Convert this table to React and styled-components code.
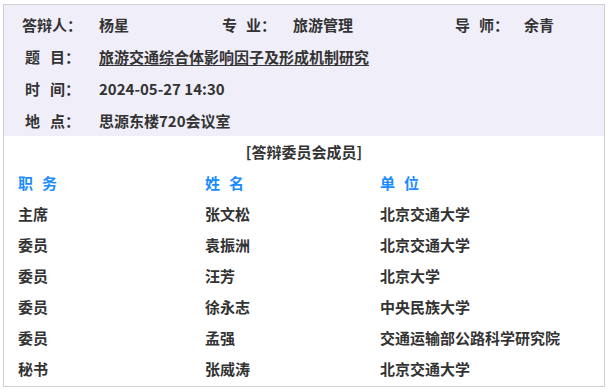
import React from 'react'
import styled, { createGlobalStyle } from 'styled-components'

const GlobalStyle = createGlobalStyle`
  html, body {
    margin: 0;
    padding: 0;
    background: #fff;
  }
  body {
    font-family: "Noto Sans CJK SC", "Microsoft YaHei", sans-serif;
  }
`

const members = [
  { role: '主席', name: '张文松', unit: '北京交通大学' },
  { role: '委员', name: '袁振洲', unit: '北京交通大学' },
  { role: '委员', name: '汪芳', unit: '北京大学' },
  { role: '委员', name: '徐永志', unit: '中央民族大学' },
  { role: '委员', name: '孟强', unit: '交通运输部公路科学研究院' },
  { role: '秘书', name: '张威涛', unit: '北京交通大学' },
]

const Panel = styled.div`
  margin: 4px 0 0 3px;
  width: 600px;
  height: 381px;
  border: 1px solid #cfcfcf;
  background: #fff;
  color: #333;
  font-size: 15px;
  font-weight: bold;
`

const Info = styled.div`
  background: #f0eef9;
  padding-top: 3px;
`

const InfoRow = styled.div`
  display: flex;
  align-items: center;
  height: 32px;
  padding-left: ${(p) => p.indent}px;
`

const Label = styled.span`
  width: ${(p) => p.w}px;
  white-space: pre;
  flex: none;
`

const Gap = styled.span`
  display: inline-block;
  width: ${(p) => p.w || 9}px;
`

const Value = styled.span`
  width: ${(p) => p.w || 'auto'}px;
  flex: none;
  text-decoration: ${(p) => (p.link ? 'underline' : 'none')};
  text-underline-offset: 2px;
`

const Caption = styled.div`
  height: 31px;
  display: flex;
  align-items: center;
  justify-content: center;
`

const Row = styled.div`
  display: grid;
  grid-template-columns: 187px 175px 1fr;
  height: 31px;
  align-items: center;
  padding-left: 14px;
  color: ${(p) => (p.head ? '#1a8cff' : '#333')};
`

const Cell = styled.span`
  white-space: pre;
`

export default function App() {
  return (
    <>
      <GlobalStyle />
      <Panel>
        <Info>
          <InfoRow indent={18}>
            <Label w={77}>答辩人：</Label>
            <Value w={123}>杨星</Value>
            <Label w={71}>专<Gap />业：</Label>
            <Value w={162}>旅游管理</Value>
            <Label w={69}>导<Gap />师：</Label>
            <Value>余青</Value>
          </InfoRow>
          <InfoRow indent={21}>
            <Label w={74}>题<Gap w={10} />目：</Label>
            <Value link>旅游交通综合体影响因子及形成机制研究</Value>
          </InfoRow>
          <InfoRow indent={21}>
            <Label w={74}>时<Gap w={10} />间：</Label>
            <Value>2024-05-27 14:30</Value>
          </InfoRow>
          <InfoRow indent={21}>
            <Label w={74}>地<Gap w={10} />点：</Label>
            <Value>思源东楼720会议室</Value>
          </InfoRow>
        </Info>
        <Caption>[答辩委员会成员]</Caption>
        <Row head>
          <Cell>职<Gap />务</Cell>
          <Cell>姓<Gap />名</Cell>
          <Cell>单<Gap />位</Cell>
        </Row>
        {members.map((m, i) => (
          <Row key={i}>
            <Cell>{m.role}</Cell>
            <Cell>{m.name}</Cell>
            <Cell>{m.unit}</Cell>
          </Row>
        ))}
      </Panel>
    </>
  )
}
